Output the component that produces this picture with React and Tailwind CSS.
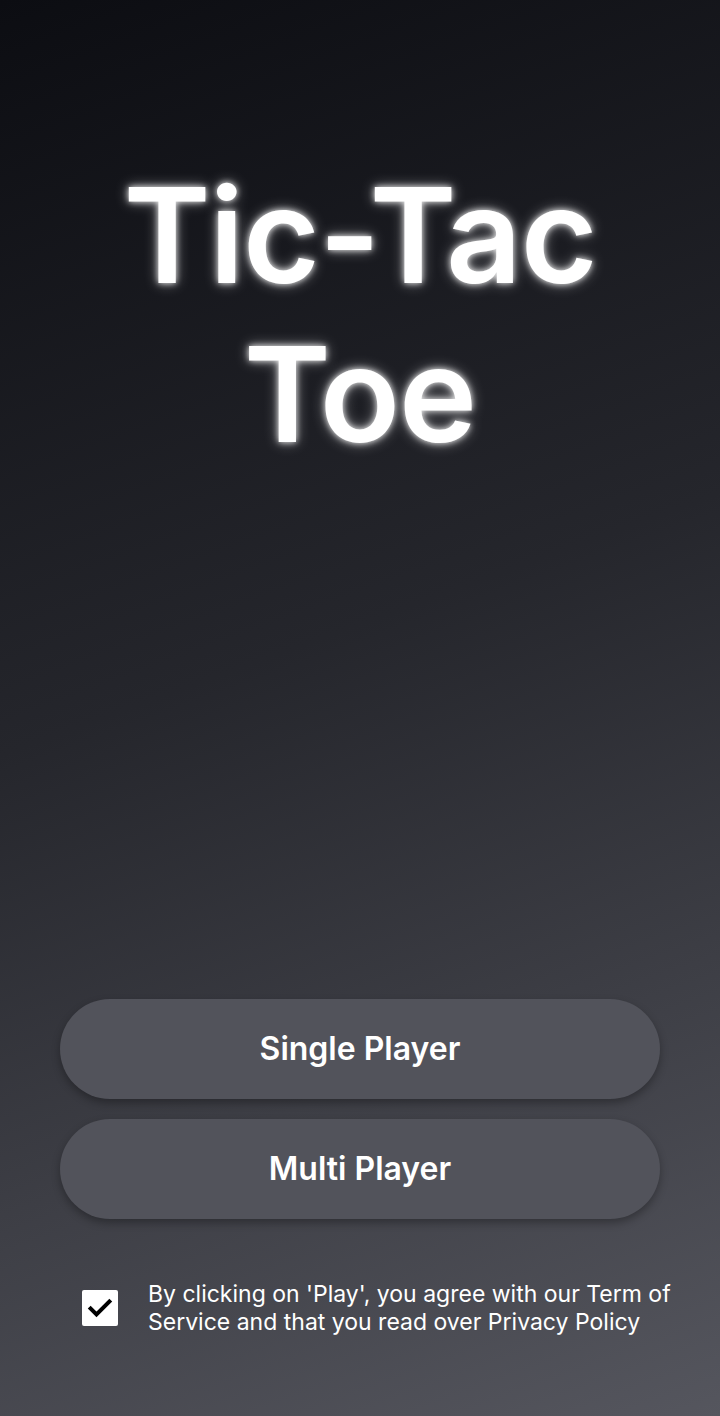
import React from "react";

export default function App() {
  return (
    <div
      className="w-[720px] h-[1416px] flex flex-col items-center bg-[linear-gradient(160deg,#0c0d12_0%,#25262c_45%,#55565e_100%)] text-white"
      style={{ fontFamily: "Inter, 'Noto Sans', sans-serif" }}
    >
      <h1 className="mt-[156px] text-center text-[132px] leading-[159px] font-semibold tracking-[-1px] [text-shadow:0_0_6px_rgba(255,255,255,0.9),0_0_14px_rgba(255,255,255,0.5)]">
        Tic-Tac
        <br />
        Toe
      </h1>
      <div className="flex-1" />
      <div className="w-[600px] flex flex-col gap-5">
        <button className="h-[100px] w-full rounded-full bg-[#52535b] text-[32px] font-semibold text-white shadow-[0_4px_8px_rgba(0,0,0,0.3)]">
          Single Player
        </button>
        <button className="h-[100px] w-full rounded-full bg-[#52535b] text-[32px] font-semibold text-white shadow-[0_4px_8px_rgba(0,0,0,0.3)]">
          Multi Player
        </button>
      </div>
      <div className="mt-[61px] mb-[80px] w-[600px] flex items-center gap-[30px] pl-[22px]">
        <div className="w-[36px] h-[36px] bg-white rounded-[2px] flex items-center justify-center shrink-0">
          <svg width="28" height="28" viewBox="0 0 24 24" fill="none" stroke="black" strokeWidth="3.5" strokeLinecap="square">
            <path d="M4 12.5l5 5L20 6.5" />
          </svg>
        </div>
        <p className="text-[23px] leading-[28px] text-white whitespace-nowrap">
          By clicking on 'Play', you agree with our Term of
          <br />
          Service and that you read over Privacy Policy
        </p>
      </div>
    </div>
  );
}
